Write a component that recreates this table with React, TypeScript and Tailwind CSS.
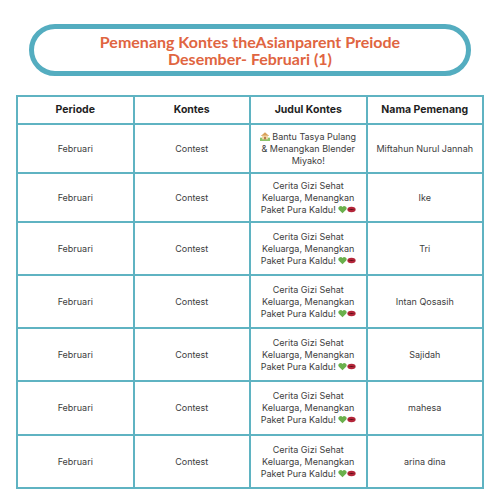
import React from "react";

const House = () => (
  <svg viewBox="0 0 12 12" className="inline-block w-[10px] h-[10px] align-[-1px] mr-[2px]">
    <rect x="0" y="8" width="12" height="4" fill="#8cc46a" />
    <polygon points="1,6 6,1.5 11,6" fill="#d9a15a" />
    <rect x="2.5" y="5.5" width="7" height="4.5" fill="#f1d9a8" />
    <rect x="5" y="7" width="2" height="3" fill="#b06a3a" />
  </svg>
);

const Heart = () => (
  <svg viewBox="0 0 12 12" className="inline-block w-[9px] h-[9px] align-[-1px] ml-[2px]">
    <path d="M6 11 L1.2 6.2 A2.8 2.8 0 0 1 6 2.6 A2.8 2.8 0 0 1 10.8 6.2 Z" fill="#6ab04c" />
  </svg>
);

const Lips = () => (
  <svg viewBox="0 0 12 12" className="inline-block w-[9px] h-[9px] align-[-1px]">
    <ellipse cx="6" cy="6" rx="5.5" ry="3.6" fill="#b3263a" />
    <path d="M1 6 Q6 4.6 11 6 Q6 7.2 1 6 Z" fill="#5a0d18" />
  </svg>
);

type Row = { title: "tasya" | "gizi"; name: string; h: string };

const rows: Row[] = [
  { title: "tasya", name: "Miftahun Nurul Jannah", h: "h-[49px]" },
  { title: "gizi", name: "Ike", h: "h-[49px]" },
  { title: "gizi", name: "Tri", h: "h-[53px]" },
  { title: "gizi", name: "Intan Qosasih", h: "h-[53px]" },
  { title: "gizi", name: "Sajidah", h: "h-[53px]" },
  { title: "gizi", name: "mahesa", h: "h-[54px]" },
  { title: "gizi", name: "arina dina", h: "h-[53px]" },
];

const cell = "border-2 border-[#5fb3c2] text-center align-middle px-1";

export default function App() {
  return (
    <div className="w-[500px] h-[500px] bg-white overflow-hidden" style={{ fontFamily: "Inter, 'Open Sans', sans-serif" }}>
      <div className="pt-[24px] px-[29px]">
        <div className="h-[52px] rounded-full border-[5px] border-[#54adc0] flex flex-col items-center justify-center">
          <p className="text-[16px] leading-[17px] font-bold text-[#e06541] text-center" style={{ fontFamily: "Lato, sans-serif" }}>
            Pemenang Kontes theAsianparent Preiode
            <br />
            Desember- Februari (1)
          </p>
        </div>
      </div>
      <div className="px-[16px] pt-[19px]">
        <table className="w-[468px] border-collapse table-fixed text-[#3d3d3d]">
          <thead>
            <tr className="h-[28px]">
              <th className={`${cell} text-[10.5px] font-bold text-[#1f1f1f]`}>Periode</th>
              <th className={`${cell} text-[10.5px] font-bold text-[#1f1f1f]`}>Kontes</th>
              <th className={`${cell} text-[10.5px] font-bold text-[#1f1f1f]`}>Judul Kontes</th>
              <th className={`${cell} text-[10.5px] font-bold text-[#1f1f1f]`}>Nama Pemenang</th>
            </tr>
          </thead>
          <tbody>
            {rows.map((r, i) => (
              <tr key={i} className={r.h}>
                <td className={`${cell} text-[9px]`}>Februari</td>
                <td className={`${cell} text-[9px]`}>Contest</td>
                <td className={`${cell} text-[9px] leading-[12px]`}>
                  {r.title === "tasya" ? (
                    <>
                      <House />
                      Bantu Tasya Pulang
                      <br />& Menangkan Blender
                      <br />
                      Miyako!
                    </>
                  ) : (
                    <>
                      Cerita Gizi Sehat
                      <br />
                      Keluarga, Menangkan
                      <br />
                      Paket Pura Kaldu!
                      <Heart />
                      <Lips />
                    </>
                  )}
                </td>
                <td className={`${cell} text-[9px]`}>{r.name}</td>
              </tr>
            ))}
          </tbody>
        </table>
      </div>
    </div>
  );
}
